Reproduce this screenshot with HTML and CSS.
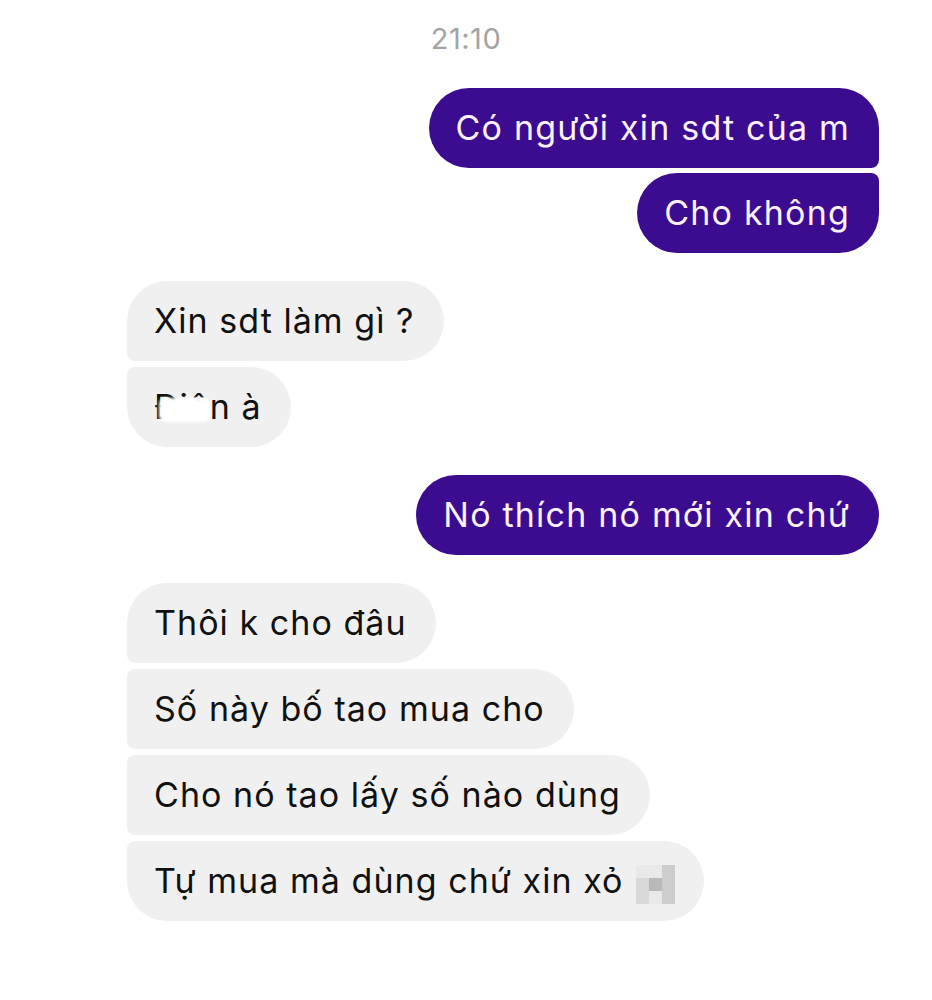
FILE: index.html
```html
<!DOCTYPE html>
<html lang="vi">
<head>
    <meta charset="UTF-8">
    <meta name="viewport" content="width=device-width, initial-scale=1.0">
    <title>Tin nhắn</title>
    <link rel="stylesheet" href="styles.css">
</head>
<body>
    <div class="time">21:10</div>

    <div class="thread">
        <div class="group out">
            <div class="bubble first">Có người xin sdt của m</div>
            <div class="bubble last">Cho không</div>
        </div>

        <div class="group in">
            <div class="bubble first">Xin sdt làm gì ?</div>
            <div class="bubble last"><span class="smudge">Điê</span>n à</div>
        </div>

        <div class="group out">
            <div class="bubble">Nó thích nó mới xin chứ</div>
        </div>

        <div class="group in">
            <div class="bubble first">Thôi k cho đâu</div>
            <div class="bubble mid">Số này bố tao mua cho</div>
            <div class="bubble mid">Cho nó tao lấy số nào dùng</div>
            <div class="bubble last">Tự mua mà dùng chứ xin xỏ
                <span class="mosaic">
                    <i class="c1"></i><i class="c1"></i><i class="c3"></i>
                    <i class="c2"></i><i class="c4"></i><i class="c3"></i>
                    <i class="c2"></i><i class="c1"></i><i class="c3"></i>
                </span>
            </div>
        </div>
    </div>
</body>
</html>
```

FILE: styles.css
```css
* {
    margin: 0;
    padding: 0;
    box-sizing: border-box;
}

body {
    font-family: Inter, "Liberation Sans", sans-serif;
    background: #fff;
    width: 932px;
    min-height: 1000px;
}

.time {
    text-align: center;
    color: #a3a3a3;
    font-size: 29px;
    line-height: 36px;
    padding-top: 21px;
    letter-spacing: 0.5px;
}

.thread {
    padding: 31px 53px 0 127px;
}

.group {
    display: flex;
    flex-direction: column;
    gap: 6px;
    margin-bottom: 28px;
}

.group.out {
    align-items: flex-end;
    gap: 5px;
}

.group.in {
    align-items: flex-start;
    letter-spacing: 1px;
}

.bubble {
    height: 80px;
    line-height: 80px;
    padding: 0 29px 0 27px;
    font-size: 34px;
    letter-spacing: 1.2px;
    border-radius: 40px;
    white-space: nowrap;
    display: flex;
    align-items: center;
}

.out .bubble {
    background: #3b0c90;
    color: #fdf2ff;
}

.in .bubble {
    background: #f0f0f0;
    color: #111;
    letter-spacing: 1.05px;
}

.out .first { border-bottom-right-radius: 8px; }
.out .last { border-top-right-radius: 8px; }

.in .first { border-bottom-left-radius: 8px; }
.in .mid { border-top-left-radius: 8px; border-bottom-left-radius: 8px; }
.in .last { border-top-left-radius: 8px; }

.smudge {
    position: relative;
}

.smudge::after {
    content: "";
    position: absolute;
    left: 5px;
    right: 0;
    top: 31px;
    bottom: 25px;
    background: #fff;
    border-radius: 6px;
    filter: blur(1.5px);
}

.mosaic {
    display: inline-grid;
    grid-template-columns: repeat(3, 13px);
    grid-template-rows: repeat(3, 13px);
    margin-left: 12px;
    margin-top: 6px;
}

.mosaic i { display: block; }
.mosaic .c1 { background: #e9e9e9; }
.mosaic .c2 { background: #d9d9d9; }
.mosaic .c3 { background: #cdcdcd; }
.mosaic .c4 { background: #b9b9b9; }
```
